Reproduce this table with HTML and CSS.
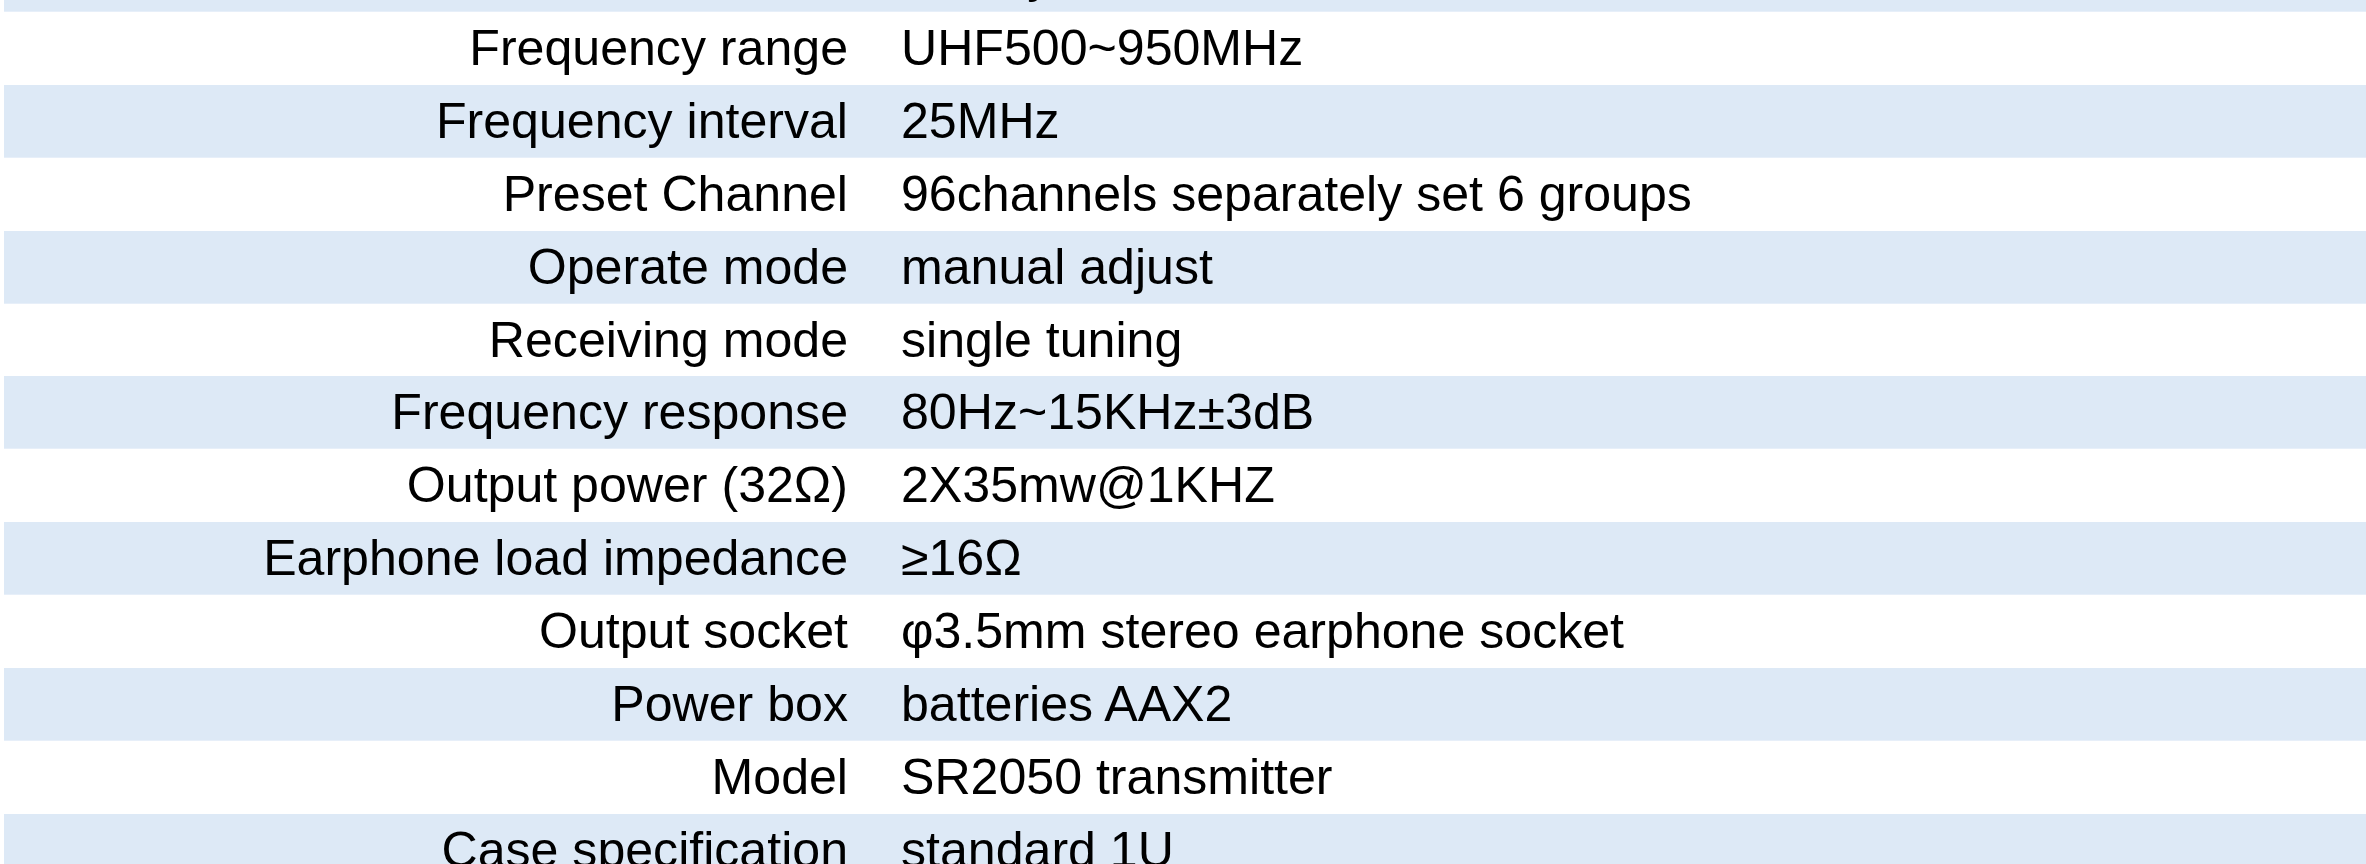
FILE: index.html
```html
<!DOCTYPE html>
<html lang="en">
<head>
<meta charset="utf-8">
<title>Specifications</title>
<link rel="stylesheet" href="styles.css">
</head>
<body>
<div class="spec">
  <div class="row alt"><div class="label">Oscillation mode</div><div class="value">PLL synthesized</div></div>
  <div class="row"><div class="label">Frequency range</div><div class="value">UHF500~950MHz</div></div>
  <div class="row alt"><div class="label">Frequency interval</div><div class="value">25MHz</div></div>
  <div class="row"><div class="label">Preset Channel</div><div class="value">96channels separately set 6 groups</div></div>
  <div class="row alt"><div class="label">Operate mode</div><div class="value">manual adjust</div></div>
  <div class="row"><div class="label">Receiving mode</div><div class="value">single tuning</div></div>
  <div class="row alt"><div class="label">Frequency response</div><div class="value">80Hz~15KHz±3dB</div></div>
  <div class="row"><div class="label">Output power (32Ω)</div><div class="value">2X35mw@1KHZ</div></div>
  <div class="row alt"><div class="label">Earphone load impedance</div><div class="value">≥16Ω</div></div>
  <div class="row"><div class="label">Output socket</div><div class="value">φ3.5mm stereo earphone socket</div></div>
  <div class="row alt"><div class="label">Power box</div><div class="value">batteries AAX2</div></div>
  <div class="row"><div class="label">Model</div><div class="value">SR2050 transmitter</div></div>
  <div class="row alt"><div class="label">Case specification</div><div class="value">standard 1U</div></div>
</div>
</body>
</html>
```
FILE: styles.css
```css
html, body {
  margin: 0;
  padding: 0;
  background: #ffffff;
  overflow: hidden;
}
body {
  width: 2366px;
  height: 864px;
}
.spec {
  margin-top: -60.9px;
  margin-left: 4px;
  display: flex;
  flex-direction: column;
  font-family: "Liberation Sans", Arial, sans-serif;
  font-size: 50.1px;
  color: #000000;
}
.row {
  display: grid;
  grid-template-columns: 844px 1fr;
  column-gap: 53px;
  height: 72.9px;
  line-height: 72.9px;
  white-space: nowrap;
}
.row.alt {
  background: #dde9f6;
  box-shadow: inset 0 -1px 0 #e7eff9;
}
.label {
  text-align: right;
}
.value {
  text-align: left;
}
```
